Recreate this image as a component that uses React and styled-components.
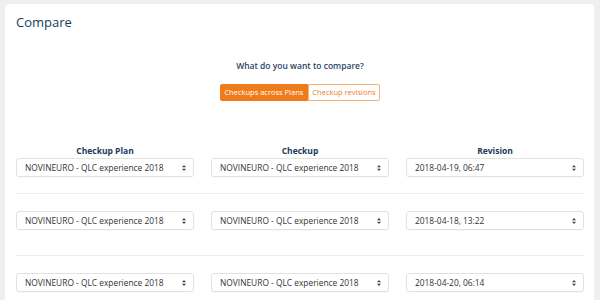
import React from "react";
import styled, { createGlobalStyle } from "styled-components";

const Global = createGlobalStyle`
  html, body { margin: 0; padding: 0; background: #efefef; }
  body { font-family: "Open Sans", "Liberation Sans", sans-serif; }
`;

const Page = styled.div`
  padding: 4px 6px 0 5px;
  height: 300px;
  box-sizing: border-box;
  overflow: hidden;
`;

const Card = styled.div`
  background: #fff;
  border-radius: 4px;
  padding: 9px 10px 20px 11px;
  min-height: 320px;
  box-sizing: border-box;
`;

const Title = styled.h1`
  margin: 0;
  font-size: 13px;
  line-height: 18px;
  font-weight: 400;
  color: #173d60;
`;

const Question = styled.div`
  margin-top: 29px;
  text-align: center;
  font-size: 8.5px;
  line-height: 12px;
  font-weight: 600;
  color: #2a4562;
`;

const Toggle = styled.div`
  display: flex;
  justify-content: center;
  margin-top: 12px;
`;

const ToggleButton = styled.button`
  font-family: inherit;
  font-size: 7.5px;
  line-height: 15px;
  padding: 0 3.5px;
  height: 17px;
  border: 1px solid;
  background: ${(p) => (p.$active ? "#f07b1a" : "#fff")};
  color: ${(p) => (p.$active ? "#fff" : "#ee7d22")};
  border-color: ${(p) => (p.$active ? "#f07b1a" : "#f5b27a")};
  border-radius: ${(p) => (p.$first ? "2px 0 0 2px" : "0 2px 2px 0")};
  cursor: pointer;
`;

const Grid = styled.div`
  display: grid;
  grid-template-columns: 1fr 1fr 1fr;
  column-gap: 17px;
  margin-top: ${(p) => p.$mt || 0}px;
`;

const ColHead = styled.div`
  text-align: center;
  font-size: 8.5px;
  line-height: 11px;
  font-weight: 700;
  color: #1b3a5a;
  margin-bottom: 2px;
`;

const Select = styled.div`
  display: flex;
  align-items: center;
  justify-content: space-between;
  height: 19px;
  box-sizing: border-box;
  border: 1px solid #e2e2e2;
  border-radius: 3px;
  padding: 0 7px 0 8px;
  font-size: 8.4px;
  color: #333;
  white-space: nowrap;
  box-shadow: 0 1px 1px rgba(0, 0, 0, 0.03);
`;

const Arrows = styled.svg`
  width: 4px;
  height: 6px;
  flex: none;
`;

const Separator = styled.hr`
  border: 0;
  border-top: 1px solid #ececec;
  margin: ${(p) => p.$above}px 0 17px;
`;

function Sel({ children }) {
  return (
    <Select>
      <span>{children}</span>
      <Arrows viewBox="0 0 4 6">
        <path d="M2 0 L4 2.3 L0 2.3 Z M2 6 L4 3.7 L0 3.7 Z" fill="#444" />
      </Arrows>
    </Select>
  );
}

const PLAN = "NOVINEURO - QLC experience 2018";
const rows = [
  "2018-04-19, 06:47",
  "2018-04-18, 13:22",
  "2018-04-20, 06:14",
];

export default function App() {
  return (
    <>
      <Global />
      <Page>
        <Card>
          <Title>Compare</Title>
          <Question>What do you want to compare?</Question>
          <Toggle>
            <ToggleButton $active $first>Checkups across Plans</ToggleButton>
            <ToggleButton>Checkup revisions</ToggleButton>
          </Toggle>
          <Grid $mt={44}>
            <ColHead>Checkup Plan</ColHead>
            <ColHead>Checkup</ColHead>
            <ColHead>Revision</ColHead>
          </Grid>
          {rows.map((rev, i) => (
            <React.Fragment key={rev}>
              <Grid>
                <Sel>{PLAN}</Sel>
                <Sel>{PLAN}</Sel>
                <Sel>{rev}</Sel>
              </Grid>
              {i < rows.length - 1 && <Separator $above={i === 0 ? 16 : 25} />}
            </React.Fragment>
          ))}
        </Card>
      </Page>
    </>
  );
}
